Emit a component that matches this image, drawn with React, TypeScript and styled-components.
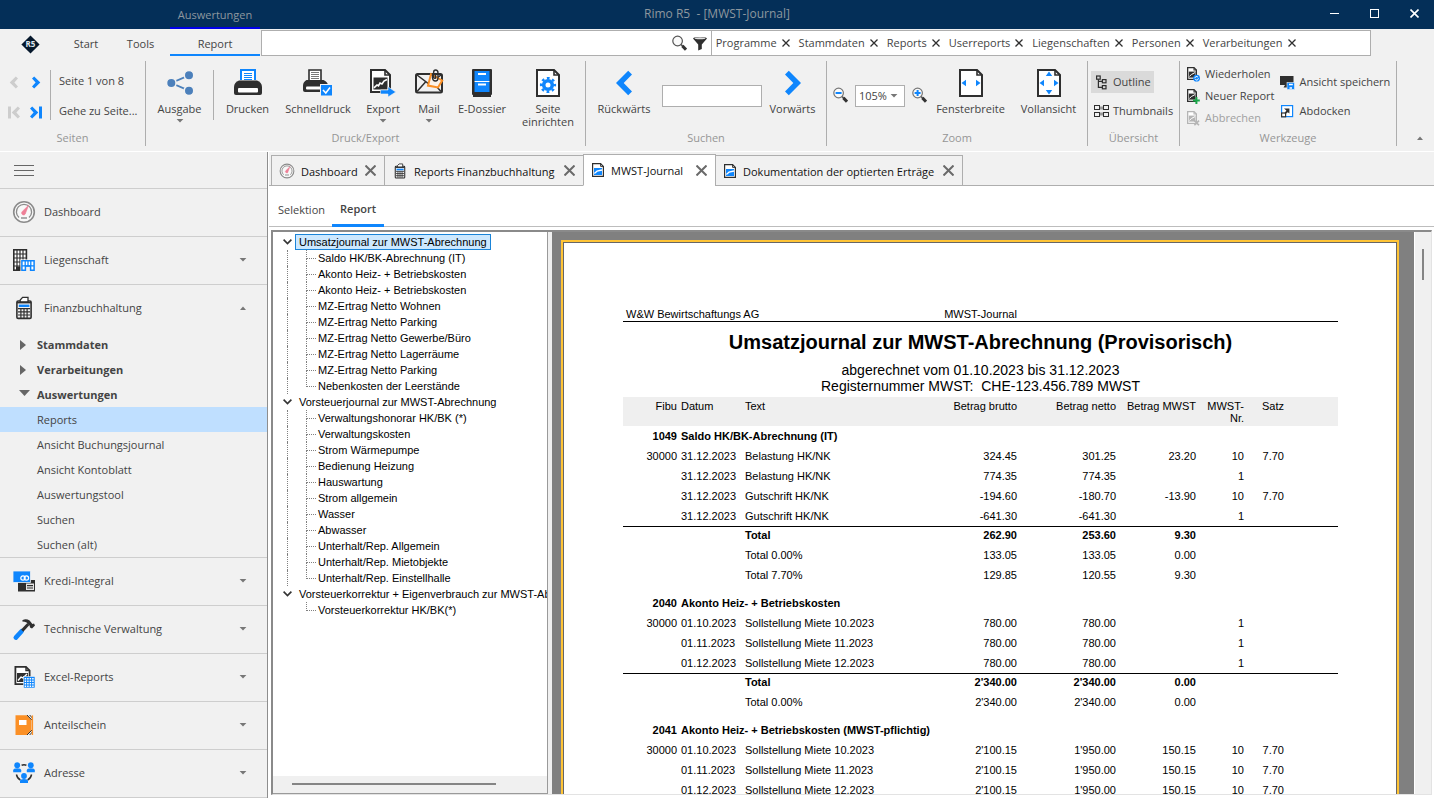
import React from "react";
import styled, { createGlobalStyle, css } from "styled-components";

const BLUE = "#0f86fd";
const INK = "#2f2f2f";
const LINE = "#aeaeae";
const CHROME = "#f1f1f1";
const UI = `"Open Sans", "Noto Sans", sans-serif`;
const REPORT = `"Liberation Sans", Arial, sans-serif`;

const Global = createGlobalStyle`
  *, *::before, *::after { box-sizing: border-box; }
  body { margin: 0; background: #fff; font: 11px/16px ${UI}; color: #444; }
  button, input, select { font: inherit; color: inherit; margin: 0; }
  button { border: 0; padding: 0; background: none; white-space: nowrap; cursor: pointer; }
  svg { display: block; flex: none; }
  ul { list-style: none; margin: 0; padding: 0; }
`;

const Shell = styled.div`
  display: flex;
  flex-direction: column;
  height: 100vh;
  overflow: hidden;
`;

/* ---------- title bar ---------- */

const TitleBar = styled.header`
  display: grid;
  grid-template-columns: 1fr auto 1fr;
  flex: none;
  height: 29px;
  background: #042f58;
  color: #8d979f;
`;

const ContextTab = styled.div`
  width: 90px;
  margin-left: 170px;
  padding-top: 7px;
  border-bottom: 2px solid #0000e6;
  text-align: center;
`;

const WindowTitle = styled.div`
  padding-top: 6px;
  font-size: 12px;
  white-space: pre;
`;

const WindowButtons = styled.div`
  display: flex;
  justify-content: flex-end;
`;

const WindowButton = styled.button`
  display: grid;
  place-items: center;
  width: 40px;
  height: 27px;
`;

/* ---------- ribbon ---------- */

const Ribbon = styled.div`
  flex: none;
  background: ${CHROME};
  border-bottom: 1px solid #fff;
`;

const TabRow = styled.div`
  display: flex;
  height: 27px;
`;

const LogoBox = styled.div`
  display: grid;
  place-items: center;
  width: 61px;
  padding-top: 3px;
`;

const RibbonTab = styled.button<{ $w: number; $active?: boolean }>`
  width: ${(p) => p.$w}px;
  padding-top: 4px;
  border-bottom: 2px solid ${(p) => (p.$active ? BLUE : "transparent")};
`;

const SearchBox = styled.div`
  display: flex;
  align-items: center;
  gap: 6px;
  flex: 450 1 0;
  height: 26px;
  margin: 1px 0 0 1px;
  padding-right: 4px;
  background: #fff;
  border: 1px solid ${LINE};
`;

const SearchInput = styled.input`
  flex: 1;
  min-width: 0;
  height: 22px;
  border: 0;
  outline: 0;
`;

const FilterBox = styled.div`
  display: flex;
  align-items: center;
  flex: 662 1 0;
  height: 26px;
  margin: 1px 63px 0 -1px;
  padding-left: 4px;
  background: #fff;
  border: 1px solid ${LINE};
  overflow: hidden;
`;

const FilterChip = styled.div`
  display: flex;
  align-items: center;
  gap: 5px;
  margin-right: 9px;
`;

const RibbonBody = styled.div`
  display: flex;
  height: 95px;
  padding: 5px 0;
`;

const Group = styled.section<{ $w: number }>`
  display: flex;
  flex-direction: column;
  width: ${(p) => p.$w}px;
  border-right: 1px solid ${LINE};
`;

const GroupBody = styled.div`
  display: flex;
  flex: 1;
  min-height: 0;
`;

const GroupName = styled.div`
  text-align: center;
  color: #969696;
`;

const Divider = styled.div`
  width: 1px;
  height: 50px;
  margin-top: 9px;
  background: ${LINE};
`;

const BigButton = styled.button<{ $w: number }>`
  display: flex;
  flex-direction: column;
  align-items: center;
  width: ${(p) => p.$w}px;
  padding-top: 8px;
  line-height: 13px;
`;

const BigLabel = styled.span`
  margin: 5px 0 4px;
`;

const CaretBox = styled.svg`
  margin: 0;
`;

const PagerGrid = styled.div`
  display: grid;
  grid-template-columns: 22px 22px;
  grid-auto-rows: 30px;
  width: 50px;
  padding: 6px 0 0 3px;
  button { display: grid; place-items: center; }
`;

const TextStack = styled.div`
  display: flex;
  flex-direction: column;
  gap: 14px;
  padding: 12px 0 0 8px;
  text-align: left;
`;

const FieldWrap = styled.div`
  display: flex;
  align-items: flex-start;
  padding-top: 24px;
`;

const FindInput = styled.input`
  width: 100px;
  height: 22px;
  border: 1px solid ${LINE};
  background: #fff;
  outline: 0;
`;

const ZoomWrap = styled(FieldWrap)`
  gap: 7px;
  padding-left: 6px;
  button { padding-top: 2px; }
`;

const ZoomSelect = styled.span`
  display: flex;
  align-items: center;
  width: 50px;
  height: 22px;
  padding-right: 6px;
  background: #fff;
  border: 1px solid ${LINE};
  select {
    appearance: none;
    flex: 1;
    min-width: 0;
    border: 0;
    padding: 0 0 0 3px;
    background: none;
    outline: 0;
  }
`;

const ToolColumn = styled.div<{ $gap: number; $top: number }>`
  display: flex;
  flex-direction: column;
  align-items: flex-start;
  gap: ${(p) => p.$gap}px;
  padding-top: ${(p) => p.$top}px;
  &:first-child { padding-left: 3px; }
`;

const ToolButton = styled.button<{ $active?: boolean; $dim?: boolean }>`
  display: flex;
  align-items: center;
  gap: 4px;
  height: 22px;
  padding: 0 3px;
  background: ${(p) => (p.$active ? "#dadada" : "none")};
  color: ${(p) => (p.$dim ? "#a0a0a0" : "inherit")};
`;

const CollapseButton = styled.button`
  display: flex;
  align-items: flex-end;
  margin-left: auto;
  padding: 0 10px 6px 0;
`;

/* ---------- side navigation ---------- */

const Workspace = styled.div`
  display: flex;
  flex: 1;
  min-height: 0;
`;

const Sidebar = styled.nav`
  width: 268px;
  flex: none;
  background: ${CHROME};
  border-right: 1px solid #8e8e8e;
  overflow: hidden;
`;

const MenuToggle = styled.button`
  display: flex;
  align-items: center;
  width: 100%;
  height: 37px;
  padding-left: 14px;
  border-bottom: 1px solid #cecece;
`;

const NavRow = styled.button<{ $open?: boolean }>`
  display: flex;
  align-items: center;
  width: 100%;
  height: ${(p) => (p.$open ? 47 : 48)}px;
  padding: 0 20px 1px 12px;
  border-bottom: ${(p) => (p.$open ? 0 : 1)}px solid #cecece;
  span.label { flex: 1; margin-left: 8px; text-align: left; }
`;

const SubList = styled.ul`
  border-bottom: 1px solid #cecece;
`;

const SubItem = styled.button<{ $head?: boolean; $active?: boolean }>`
  display: flex;
  align-items: center;
  width: 100%;
  height: 25px;
  padding-left: 18px;
  background: ${(p) => (p.$active ? "#bfdfff" : "none")};
  font-weight: ${(p) => (p.$head ? 700 : 400)};
`;

const ArrowCell = styled.span`
  width: 19px;
`;

/* ---------- document area ---------- */

const Main = styled.main`
  display: flex;
  flex-direction: column;
  flex: 1;
  min-width: 0;
  padding: 0 0 3px 1px;
  background: #fff;
`;

const DocTabs = styled.div`
  display: flex;
  align-items: flex-end;
  height: 34px;
  flex: none;
  padding-left: 2px;
  background: ${CHROME};
  box-shadow: inset 0 -1px 0 ${LINE};
`;

const DocTab = styled.div<{ $w: number; $active?: boolean }>`
  display: flex;
  align-items: center;
  width: ${(p) => p.$w}px;
  height: ${(p) => (p.$active ? 32 : 31)}px;
  margin-right: -1px;
  padding: 0 8px 0 7px;
  border: 1px solid ${LINE};
  color: #111;
  ${(p) =>
    p.$active &&
    css`
      background: #fff;
      border-bottom-color: #fff;
    `}
  button.title { flex: 1; margin-left: 6px; padding-top: 2px; text-align: left; font-weight: 500; }
`;

const SubTabs = styled.div`
  display: flex;
  flex: none;
  height: 41px;
  padding-left: 3px;
  border-bottom: 1px solid #bdbdbd;
`;

const SubTab = styled.button<{ $active?: boolean }>`
  height: 41px;
  padding: ${(p) => (p.$active ? "8px 8px 0" : "10px 7px 0 6px")};
  border-bottom: 3px solid ${(p) => (p.$active ? BLUE : "transparent")};
  font-weight: ${(p) => (p.$active ? 600 : 400)};
`;

const Viewer = styled.div`
  display: flex;
  flex: 1;
  min-height: 0;
  margin: 3px 2px 0;
  border: 1px solid #8a8a8a;
  border-width: 2px 1px 1px 2px;
  border-right-color: #e3e3e3;
  border-bottom-color: #e3e3e3;
`;

const TreePane = styled.div`
  display: flex;
  flex-direction: column;
  flex: none;
  width: 275px;
  background: #fff;
  border-right: 1px solid #9a9a9a;
  border-bottom: 1px solid #9a9a9a;
  overflow: hidden;
`;

const Tree = styled.ul`
  flex: 1;
  min-height: 0;
  padding: 2px 0 0 7px;
  overflow: hidden;
  font: 11px/16px ${REPORT};
  color: #000;
`;

const RootRow = styled.div`
  display: flex;
  align-items: center;
  height: 16px;
`;

const NodeLabel = styled.button<{ $selected?: boolean }>`
  flex: none;
  height: 16px;
  padding: 0 3px;
  line-height: 14px;
  border: 1px solid ${(p) => (p.$selected ? "#1a84d8" : "transparent")};
  background: ${(p) => (p.$selected ? "#cce8ff" : "none")};
`;

const Expander = styled.span`
  display: grid;
  place-items: center;
  flex: none;
  width: 14px;
  height: 16px;
  margin-right: 1px;
`;

const Leaf = styled.li<{ $root: boolean }>`
  display: flex;
  height: 16px;
  margin-left: 7px;
  padding-left: 18px;
  border-left: 1px dotted ${(p) => (p.$root ? "#808080" : "transparent")};
`;

const Branch = styled.span<{ $last: boolean }>`
  width: 10px;
  margin-right: -2px;
  &::before, &::after { content: ""; display: block; height: 8px; border-left: 1px dotted #808080; }
  &::before { height: 9px; border-bottom: 1px dotted #808080; }
  &::after { height: 7px; border-left-color: ${(p) => (p.$last ? "transparent" : "#808080")}; }
`;

const HScroll = styled.div`
  flex: none;
  height: 17px;
  padding: 7px 51px 0 19px;
  background: #f0f0f0;
  div { height: 2px; background: #858585; }
`;

const Splitter = styled.div`
  flex: none;
  width: 4px;
  background: #f0f0f0;
`;

const PaperDesk = styled.div`
  flex: 1;
  min-width: 0;
  padding: 8px 15px 0 9px;
  background: #808080;
  overflow: hidden;
`;

const VScroll = styled.div`
  flex: none;
  width: 17px;
  padding: 17px 0 0 7px;
  background: #f0f0f0;
  border-left: 1px solid #fff;
  div { width: 2px; height: 31px; background: #858585; }
`;

const Paper = styled.article`
  min-height: 1180px;
  padding: 64px 58px 0 59px;
  background: #fff;
  border: 1px solid #666;
  outline: 2px solid #ffc436;
  margin: 2px;
  font: 11px/12px ${REPORT};
  color: #000;
`;

const PaperHead = styled.div`
  display: grid;
  grid-template-columns: 1fr auto 1fr;
  height: 15px;
  padding: 1px 3px 0;
  border-bottom: 1px solid #000;
`;

const ReportTitle = styled.h1`
  margin: 8px 0;
  text-align: center;
  font-size: 20px;
  line-height: 24px;
`;

const ReportSub = styled.p`
  margin: 0;
  text-align: center;
  font-size: 14px;
  line-height: 16px;
  white-space: pre;
`;

const ReportTable = styled.table`
  width: 100%;
  margin-top: 3px;
  border-collapse: separate;
  border-spacing: 0;
  table-layout: fixed;
  th, td { padding: 0 2px; text-align: right; vertical-align: middle; font-weight: inherit; white-space: nowrap; }
  th.l, td.l { text-align: left; }
  thead th { height: 29px; padding-top: 3px; vertical-align: top; background: #efefef; }
`;

const Row = styled.tr<{ $kind: "group" | "line" | "total" | "gap" }>`
  height: ${(p) => ({ group: 20, line: 20, total: 19, gap: 8 })[p.$kind]}px;
  font-weight: ${(p) => (p.$kind === "group" || p.$kind === "total" ? 700 : 400)};
  td {
    border-top: ${(p) => (p.$kind === "total" ? "1px solid #000" : "0")};
    padding-bottom: ${(p) => (p.$kind === "total" ? 2 : 0)}px;
  }
`;

/* ---------- icons ---------- */

const Caret = ({ up }: { up?: boolean }) => (
  <CaretBox width="8" height="4" viewBox="0 0 8 4" fill="#777">
    <path d={up ? "M1 4 H7 L4 0.6 Z" : "M0.6 0 H7.4 L4 3.6 Z"} />
  </CaretBox>
);

const Cross = ({ s = 8, w = 1.3, c = INK }: { s?: number; w?: number; c?: string }) => (
  <svg width={s} height={s} viewBox={`0 0 ${s} ${s}`} stroke={c} strokeWidth={w}>
    <path d={`M0.5 0.5 L${s - 0.5} ${s - 0.5} M${s - 0.5} 0.5 L0.5 ${s - 0.5}`} />
  </svg>
);

const BigChevron = ({ right }: { right?: boolean }) => (
  <svg width="18" height="28" viewBox="0 0 18 28" fill={BLUE}>
    {right ? (
      <path d="M1 5.5 L4.8 1.7 L17 14 L4.8 26.3 L1 22.5 L9.3 14 Z" />
    ) : (
      <path d="M17 5.5 L13.2 1.7 L1 14 L13.2 26.3 L17 22.5 L8.7 14 Z" />
    )}
  </svg>
);

const PageChevron = ({ right, bar, c = BLUE }: { right?: boolean; bar?: boolean; c?: string }) => (
  <svg width="12" height="13" viewBox="0 0 12 13" fill={c}>
    {right ? (
      <path d={bar ? "M0 2.6 L2.2 0.4 L8.3 6.5 L2.2 12.6 L0 10.4 L3.6 6.5 Z" : "M2 2.6 L4.2 0.4 L10.3 6.5 L4.2 12.6 L2 10.4 L5.6 6.5 Z"} />
    ) : (
      <path d={bar ? "M12 2.6 L9.8 0.4 L3.7 6.5 L9.8 12.6 L12 10.4 L8.4 6.5 Z" : "M10 2.6 L7.8 0.4 L1.7 6.5 L7.8 12.6 L10 10.4 L6.4 6.5 Z"} />
    )}
    {bar && <rect x={right ? 9 : 0} y="0.5" width="3" height="12" />}
  </svg>
);

const Logo = () => (
  <svg width="19" height="19" viewBox="0 0 19 19">
    <path d="M9.5 0.4 L18.6 9.5 L9.5 18.6 L0.4 9.5 Z" fill="#06182c" />
    <text x="9.5" y="12.3" textAnchor="middle" fontFamily="Open Sans, sans-serif" fontWeight="700" fontSize="8" fill="#dfe6ee">R5</text>
  </svg>
);

const Magnifier = ({ sign }: { sign?: "+" | "-" }) => (
  <svg width="15" height="16" viewBox="0 0 15 16" fill="none">
    <path d="M8.9 9.4 L11 11.5" stroke="#555" strokeWidth="1.6" />
    <path d="M10.4 10.9 L14 14.6" stroke="#333" strokeWidth="3" />
    <circle cx="5.6" cy="6" r="4.8" stroke={sign ? "#777" : "#555"} strokeWidth="1.2" fill="#fafafa" />
    {sign && <path d="M2.6 6 H8.6" stroke={BLUE} strokeWidth="2" />}
    {sign === "+" && <path d="M5.6 3 V9" stroke={BLUE} strokeWidth="2" />}
  </svg>
);

const Funnel = () => (
  <svg width="14" height="15" viewBox="0 0 14 15">
    <path d="M0 2.5 C1 0.6 13 0.6 14 2.5 L8.8 8.4 V13 L5.2 14.6 V8.4 Z" fill={INK} />
    <ellipse cx="7" cy="2.3" rx="5.4" ry="1" fill="#ddd" />
  </svg>
);

const ShareIcon = () => (
  <svg width="28" height="28" viewBox="0 0 28 28" fill="#4c80bb">
    <path d="M23 6.3 L5.3 14 L23 21.7" fill="none" stroke="#4c80bb" strokeWidth="1.8" />
    <g stroke={CHROME} strokeWidth="1.6">
      <circle cx="5.3" cy="14" r="4.8" /><circle cx="23" cy="6.3" r="4.8" /><circle cx="23" cy="21.7" r="4.8" />
    </g>
  </svg>
);

const PrinterIcon = () => (
  <svg width="28" height="28" viewBox="0 0 28 28">
    <path d="M7 11 V1 H21 V11" fill="#fff" stroke={BLUE} strokeWidth="2" />
    <path d="M10 4.5 H18 M10 6.5 H18 M10 8.5 H18 M10 10.5 H18" stroke={BLUE} />
    <path d="M5 11.5 H23 C26 12.5 28 15 28 18 V24 Q28 26 26 26 H2 Q0 26 0 24 V18 C0 15 2 12.5 5 11.5 Z" fill={INK} />
    <rect x="4" y="19" width="20" height="4.5" rx="1" fill="#fff" />
  </svg>
);

const QuickPrintIcon = () => (
  <svg width="30" height="28" viewBox="0 0 30 28">
    <path d="M6 11 V1 H18 V11" fill="#fff" stroke={INK} strokeWidth="1.6" />
    <path d="M8 3.5 H16 M8 5.5 H16 M8 7.5 H16 M8 9.5 H16" stroke="#777" />
    <path d="M3.5 11 H20.5 C23 12 25 14 25 16.5 V21 Q25 23 23 23 H2 Q0 23 0 21 V16.5 C0 14 1.5 12 3.5 11 Z" fill={INK} />
    <rect x="3" y="17.5" width="16" height="3" rx="1" fill="#fff" />
    <rect x="17.5" y="15.5" width="12" height="11.5" fill={BLUE} stroke={CHROME} />
    <path d="M20 21 L22.8 24 L27 18.5" fill="none" stroke="#fff" strokeWidth="1.5" />
  </svg>
);

const DocOutline = ({ w = 24, h = 28, fold = 6, t = 2, c = INK }) => (
  <>
    <path d={`M${t / 2} ${t / 2} H${w - fold} L${w - t / 2} ${fold} V${h - t / 2} H${t / 2} Z`} fill="#fff" stroke={c} strokeWidth={t} />
    <path d={`M${w - fold} ${t / 2} V${fold} H${w - t / 2}`} fill="none" stroke={c} strokeWidth={t * 0.8} />
  </>
);

const ExportIcon = () => (
  <svg width="26" height="28" viewBox="0 0 26 28">
    <DocOutline w={21} h={24} fold={6} />
    <rect x="3.5" y="8.5" width="14" height="12" fill={INK} />
    <path d="M4 18.8 L7 16 L8.5 16.8 L10 14 L12 15 L14 12 L17 10.5" fill="none" stroke="#fff" strokeWidth="1.6" />
    <path d="M10.5 21 H18 V17.8 L25.8 23 L18 28 V25 H10.5 Z" fill={BLUE} stroke={CHROME} strokeWidth="0.6" />
  </svg>
);

const MailIcon = () => (
  <svg width="29" height="28" viewBox="0 0 29 28" fill="none">
    <rect x="1" y="5" width="26" height="18.5" rx="1.5" stroke={INK} strokeWidth="2" />
    <path d="M2 6 L14 15 L26 6 M2 22.5 L10.5 13 M26 22.5 L17.5 13" stroke={INK} strokeWidth="1.5" />
    <path d="M16 5.2 L27.2 11.5 L23 18.4 L13 16.6 Z" fill="#fbf3ea" stroke="#fb9026" strokeWidth="2" />
    <path d="M17.5 4.5 V9 Q17.8 12 20.4 12 Q23 12 23 9 V4 Q23 1 20.6 1 Q18.6 1 18.6 3.6 V8.4 Q19 9.6 20.6 9 V4.6" stroke={INK} strokeWidth="1.4" />
  </svg>
);

const CabinetIcon = () => (
  <svg width="20" height="28" viewBox="0 0 20 28">
    <rect x="0" y="0" width="20" height="26" rx="1" fill={INK} />
    <rect x="1" y="25" width="18" height="3" fill={INK} />
    <rect x="2.5" y="2" width="15" height="10" fill={BLUE} /><rect x="2.5" y="13" width="15" height="10" fill={BLUE} />
    <path d="M2.5 12.5 H17.5" stroke="#fff" />
    <path d="M6 5 H14 M6 15.5 H14" stroke="#fff" strokeWidth="2" />
  </svg>
);

const PageSetupIcon = () => (
  <svg width="24" height="28" viewBox="0 0 24 28">
    <DocOutline />
    <circle cx="12" cy="16" r="4.3" fill="none" stroke={BLUE} strokeWidth="3.6" />
    <circle cx="12" cy="16" r="6.9" fill="none" stroke={BLUE} strokeWidth="2.4" strokeDasharray="2.7 2.72" strokeDashoffset="1.35" />
  </svg>
);

const FitIcon = ({ both }: { both?: boolean }) => (
  <svg width="24" height="28" viewBox="0 0 24 28">
    <DocOutline />
    <g fill={BLUE}>
      <path d="M2.5 14 L7 10.8 V17.2 Z M21.5 14 L17 10.8 V17.2 Z" />
      {both && <path d="M12 2.5 L8.8 7 H15.2 Z M12 25.5 L8.8 21 H15.2 Z" />}
    </g>
  </svg>
);

const OutlineIcon = () => (
  <svg width="15" height="15" viewBox="0 0 15 15" fill="none" stroke={INK} strokeWidth="1.2">
    <rect x="2.6" y="1" width="3.6" height="3.2" /><rect x="8.4" y="4.6" width="3.6" height="3.2" /><rect x="8.4" y="10.6" width="3.6" height="3.2" />
    <path d="M4.4 4.2 V12.4 H8.4 M4.4 6.4 H8.4" />
  </svg>
);

const ThumbsIcon = () => (
  <svg width="15" height="12" viewBox="0 0 15 12" fill="none" stroke={INK} strokeWidth="1">
    <path d="M6 3 H9 M6 9 H9" stroke="#999" strokeWidth="3" />
    <rect x="0.5" y="0.5" width="5" height="4" /><rect x="9.5" y="0.5" width="5" height="4" />
    <rect x="0.5" y="7.5" width="5" height="4" /><rect x="9.5" y="7.5" width="5" height="4" />
  </svg>
);

const ReportGlyph = ({ kind }: { kind: "again" | "new" | "stop" }) => {
  const c = kind === "stop" ? "#b5b5b5" : INK;
  return (
    <svg width="15" height="15" viewBox="0 0 15 15">
      <g transform="translate(1 0)"><DocOutline w={10} h={13} fold={3} t={1.3} c={c} /></g>
      <rect x="2.8" y="4.6" width="6.6" height="6" fill={c} />
      <path d="M3.4 9.4 L5.6 7.4 L9 5.6" stroke="#fff" fill="none" />
      {kind === "again" && <><circle cx="10.6" cy="11.2" r="3.4" fill={BLUE} /><path d="M8.8 11.2 a1.8 1.8 0 0 1 3.2 -1 M12.4 11.4 a1.8 1.8 0 0 1 -3.2 1" stroke="#fff" fill="none" /></>}
      {kind === "new" && <path d="M10.4 8 V15 M7 11.4 H13.8" stroke="#19a649" strokeWidth="2" />}
      {kind === "stop" && <path d="M8.4 9.6 L13 14.2 M13 9.6 L8.4 14.2" stroke={c} strokeWidth="1.6" />}
    </svg>
  );
};

const SaveViewIcon = () => (
  <svg width="15" height="15" viewBox="0 0 15 15">
    <rect x="0" y="1" width="13.5" height="9" fill={INK} />
    <path d="M5 10 H9 V12.5 H3.5" fill={INK} />
    <rect x="7" y="7.5" width="7.5" height="7" fill={BLUE} stroke={CHROME} strokeWidth="0.6" />
    <path d="M9 9.5 H12.8 M9.5 13 H12" stroke="#fff" strokeWidth="1.6" />
  </svg>
);

const UndockIcon = () => (
  <svg width="15" height="15" viewBox="0 0 15 15">
    <rect x="1.6" y="1.6" width="11" height="11" fill="#fff" stroke={BLUE} strokeWidth="1.2" />
    <rect x="1.6" y="9" width="4" height="3.8" fill="#fff" stroke={INK} strokeWidth="1.2" />
    <path d="M4 4.6 H9.4 V9.6 L7.8 8.2 L5.6 10 L4.6 9 L6.4 6.6 Z" fill={INK} />
  </svg>
);

const GaugeIcon = ({ s = 24 }: { s?: number }) => (
  <svg width={s} height={s} viewBox="0 0 24 24" fill="none" stroke="#8b8b8b">
    <circle cx="12" cy="12" r="10.3" strokeWidth="1.6" fill="#f8f8f8" />
    <path d="M7 17.6 A7.6 7.6 0 1 1 17 17.6" strokeWidth="1.3" />
    <path d="M9 18 H15" strokeWidth="1.4" />
    <path d="M16.6 5.2 L10.3 11.4 A2 2 0 1 0 13.6 13 Z" fill="#ee8097" stroke="#ee8097" strokeWidth="0.6" />
  </svg>
);

const BuildingIcon = () => (
  <svg width="24" height="24" viewBox="0 0 24 24">
    <rect x="1.8" y="1.8" width="12.6" height="20.4" fill="#fff" stroke={INK} strokeWidth="1.6" />
    <path d="M5 2 V22 M8 2 V22 M11 2 V22 M2 6 H14 M2 10 H14 M2 14 H14 M2 18 H14" stroke={INK} strokeWidth="1.2" />
    <path d="M4 22 V18.5 H9 V22" fill={INK} />
    <rect x="8.4" y="11.4" width="15.6" height="12.6" fill={CHROME} />
    <path d="M9.9 22.3 V12.8 H22.1 V22.3 H18.6 V18 H13.4 V22.3 Z" fill="#fff" stroke={BLUE} strokeWidth="1.5" />
    <path d="M13.2 13 V18 M16 13 V18 M18.8 13 V18 M10 17.8 H22" stroke={BLUE} strokeWidth="1.3" />
  </svg>
);

const CalculatorIcon = ({ s = 24 }: { s?: number }) => (
  <svg width={s} height={s} viewBox="0 0 24 24">
    <rect x="4.9" y="5" width="14.2" height="17.4" rx="1.2" fill={CHROME} stroke={INK} strokeWidth="1.6" />
    <path d="M8.2 6 V4 L10.6 1.4 H16 V6 Z" fill="#fff" stroke={INK} strokeWidth="1.3" />
    <path d="M5 6.6 H19" stroke={INK} strokeWidth="1.6" />
    <rect x="6.8" y="8.6" width="10.6" height="2.4" fill={BLUE} />
    <path d="M6 12.6 H18 M6 15.8 H18 M6 19 H18 M8.9 12.6 V22 M12 12.6 V22 M15.1 12.6 V22" stroke={INK} strokeWidth="1.2" />
  </svg>
);

const CardsIcon = () => (
  <svg width="24" height="24" viewBox="0 0 24 24">
    <rect x="6" y="11" width="17" height="11.5" fill={INK} />
    <path d="M14 14.5 H22 V21 H14 Z" fill="#e6e6e6" /><path d="M15 16.6 H21 M15 19 H21" stroke={INK} strokeWidth="1.1" />
    <rect x="1" y="2" width="17.5" height="11.5" fill={BLUE} stroke={CHROME} strokeWidth="0.8" />
    <g fill="none" stroke="#fff" strokeWidth="1.2"><circle cx="11" cy="9" r="2.2" /><circle cx="14.4" cy="9" r="2.2" /></g>
  </svg>
);

const HammerIcon = () => (
  <svg width="24" height="24" viewBox="0 0 24 24">
    <path d="M3.8 20.6 L9.6 14.2" stroke={BLUE} strokeWidth="4.6" strokeLinecap="round" />
    <path d="M10.2 13.6 L16.4 7" stroke={INK} strokeWidth="3" />
    <path d="M10.4 3.2 Q14 1 17.6 3.6 L20.4 7 L22 6.4 L23 8.4 L20 11.4 L18 10.6 L17.6 8.6 L14.6 5.6 Q12.6 4.6 10.4 4.6 Z" fill={INK} />
  </svg>
);

const ExcelIcon = () => (
  <svg width="24" height="24" viewBox="0 0 24 24">
    <g transform="translate(2.5 1)"><DocOutline w={16} h={19} fold={4.5} t={1.8} /></g>
    <rect x="5" y="8" width="11" height="9" fill={INK} />
    <path d="M6 15.5 L9 12 L11 13 L15 9" stroke="#fff" strokeWidth="1.4" fill="none" />
    <rect x="11.5" y="11.5" width="11.5" height="11.5" fill={BLUE} stroke={CHROME} strokeWidth="0.6" />
    <path d="M13.4 13 V22.4 M15.9 13 V22.4 M18.4 13 V22.4 M20.9 13 V22.4" stroke="#fff" strokeWidth="1.5" strokeDasharray="1.6 0.9" />
  </svg>
);

const CertificateIcon = () => (
  <svg width="24" height="24" viewBox="0 0 24 24">
    <path d="M3.5 2.2 H15 L19.4 7 V17 L15 22 H3.5 Z" fill="#fb9026" />
    <rect x="7" y="7" width="7.5" height="5" fill="#fff" />
    <path d="M15 2 L20 7.2 M17.6 2 L20.4 5 M15 22 L20 17 M17.6 22 L20.4 19" stroke={INK} />
    <path d="M20.4 2.4 V22" stroke="#fb9026" strokeWidth="1.4" />
  </svg>
);

const Person = ({ x, y }: { x: number; y: number }) => (
  <g fill={BLUE}>
    <circle cx={x} cy={y} r="2.9" />
    <path d={`M${x - 4} ${y + 7} V${y + 5} Q${x - 4} ${y + 3} ${x} ${y + 3} Q${x + 4} ${y + 3} ${x + 4} ${y + 5} V${y + 7} Z`} />
  </g>
);

const PeopleIcon = () => (
  <svg width="24" height="24" viewBox="0 0 24 24">
    <path d="M9.6 4.2 Q12 3.2 14.4 4.2 M4.4 13.5 Q5.4 17.6 8.4 19 M19.6 13.5 Q18.6 17.6 15.6 19" fill="none" stroke={INK} strokeWidth="1.5" />
    <Person x={5.2} y={4.2} /><Person x={18.8} y={4.2} /><Person x={12} y={15} />
  </svg>
);

const PreviewDocIcon = () => (
  <svg width="14" height="16" viewBox="0 0 14 16">
    <g transform="translate(1 1)"><DocOutline w={12} h={14} fold={3.4} t={1.2} /></g>
    <rect x="3" y="6" width="8" height="7" fill={BLUE} />
    <path d="M3.4 11.4 L6 9.2 L11 8" stroke="#fff" strokeWidth="1.3" fill="none" />
  </svg>
);

/* ---------- data ---------- */

const filters = ["Programme", "Stammdaten", "Reports", "Userreports", "Liegenschaften", "Personen", "Verarbeitungen"];

const subItems = ["Reports", "Ansicht Buchungsjournal", "Ansicht Kontoblatt", "Auswertungstool", "Suchen", "Suchen (alt)"];

const tree = [
  {
    name: "Umsatzjournal zur MWST-Abrechnung",
    items: ["Saldo HK/BK-Abrechnung (IT)", "Akonto Heiz- + Betriebskosten", "Akonto Heiz- + Betriebskosten", "MZ-Ertrag Netto Wohnen", "MZ-Ertrag Netto Parking", "MZ-Ertrag Netto Gewerbe/Büro", "MZ-Ertrag Netto Lagerräume", "MZ-Ertrag Netto Parking", "Nebenkosten der Leerstände"],
  },
  {
    name: "Vorsteuerjournal zur MWST-Abrechnung",
    items: ["Verwaltungshonorar HK/BK (*)", "Verwaltungskosten", "Strom Wärmepumpe", "Bedienung Heizung", "Hauswartung", "Strom allgemein", "Wasser", "Abwasser", "Unterhalt/Rep. Allgemein", "Unterhalt/Rep. Mietobjekte", "Unterhalt/Rep. Einstellhalle"],
  },
  { name: "Vorsteuerkorrektur + Eigenverbrauch zur MWST-Abrechnung", items: ["Vorsteuerkorrektur HK/BK(*)"] },
];

type ReportRow = { kind: "group" | "line" | "total" | "gap"; cells: string[] };
const line = (...cells: string[]): ReportRow => ({ kind: "line", cells });
const total = (...cells: string[]): ReportRow => ({ kind: "total", cells: ["", "", "Total", ...cells] });
const group = (nr: string, name: string): ReportRow => ({ kind: "group", cells: [nr, name] });
const gap: ReportRow = { kind: "gap", cells: [] };

const report: ReportRow[] = [
  group("1049", "Saldo HK/BK-Abrechnung (IT)"),
  line("30000", "31.12.2023", "Belastung HK/NK", "324.45", "301.25", "23.20", "10", "7.70"),
  line("", "31.12.2023", "Belastung HK/NK", "774.35", "774.35", "", "1", ""),
  line("", "31.12.2023", "Gutschrift HK/NK", "-194.60", "-180.70", "-13.90", "10", "7.70"),
  line("", "31.12.2023", "Gutschrift HK/NK", "-641.30", "-641.30", "", "1", ""),
  total("262.90", "253.60", "9.30", "", ""),
  line("", "", "Total 0.00%", "133.05", "133.05", "0.00", "", ""),
  line("", "", "Total 7.70%", "129.85", "120.55", "9.30", "", ""),
  gap,
  group("2040", "Akonto Heiz- + Betriebskosten"),
  line("30000", "01.10.2023", "Sollstellung Miete 10.2023", "780.00", "780.00", "", "1", ""),
  line("", "01.11.2023", "Sollstellung Miete 11.2023", "780.00", "780.00", "", "1", ""),
  line("", "01.12.2023", "Sollstellung Miete 12.2023", "780.00", "780.00", "", "1", ""),
  total("2'340.00", "2'340.00", "0.00", "", ""),
  line("", "", "Total 0.00%", "2'340.00", "2'340.00", "0.00", "", ""),
  gap,
  group("2041", "Akonto Heiz- + Betriebskosten (MWST-pflichtig)"),
  line("30000", "01.10.2023", "Sollstellung Miete 10.2023", "2'100.15", "1'950.00", "150.15", "10", "7.70"),
  line("", "01.11.2023", "Sollstellung Miete 11.2023", "2'100.15", "1'950.00", "150.15", "10", "7.70"),
  line("", "01.12.2023", "Sollstellung Miete 12.2023", "2'100.15", "1'950.00", "150.15", "10", "7.70"),
];

/* ---------- composed parts ---------- */

const Big = ({ w, icon, label, menu }: { w: number; icon: React.ReactNode; label: React.ReactNode; menu?: boolean }) => (
  <BigButton $w={w}>
    {icon}
    <BigLabel>{label}</BigLabel>
    {menu && <Caret />}
  </BigButton>
);

const Nav = ({ icon, label, arrow, open }: { icon: React.ReactNode; label: string; arrow?: boolean; open?: boolean }) => (
  <NavRow $open={open} aria-expanded={open}>
    {icon}
    <span className="label">{label}</span>
    {arrow && <Caret up={open} />}
  </NavRow>
);

const DocumentTab = ({ w, icon, label, active }: { w: number; icon: React.ReactNode; label: string; active?: boolean }) => (
  <DocTab $w={w} $active={active}>
    {icon}
    <button className="title">{label}</button>
    <button aria-label={`${label} schliessen`}><Cross s={11} w={2} c="#6a6a6a" /></button>
  </DocTab>
);

export default function App() {
  return (
    <Shell>
      <Global />
      <TitleBar>
        <ContextTab>Auswertungen</ContextTab>
        <WindowTitle>{"Rimo R5  - [MWST-Journal]"}</WindowTitle>
        <WindowButtons>
          <WindowButton aria-label="Minimieren"><svg width="9" height="9" stroke="#fff"><path d="M0 4.5 H9" /></svg></WindowButton>
          <WindowButton aria-label="Maximieren"><svg width="9" height="9" fill="none" stroke="#fff"><rect x="0.5" y="0.5" width="8" height="8" /></svg></WindowButton>
          <WindowButton aria-label="Schliessen"><Cross s={9} w={1.6} c="#fff" /></WindowButton>
        </WindowButtons>
      </TitleBar>

      <Ribbon>
        <TabRow>
          <LogoBox><Logo /></LogoBox>
          <RibbonTab $w={50}>Start</RibbonTab>
          <RibbonTab $w={59}>Tools</RibbonTab>
          <RibbonTab $w={90} $active>Report</RibbonTab>
          <SearchBox>
            <SearchInput type="text" aria-label="Suche" />
            <button aria-label="Suchen"><Magnifier /></button>
            <button aria-label="Filtern"><Funnel /></button>
          </SearchBox>
          <FilterBox>
            {filters.map((f) => (
              <FilterChip key={f}>
                <span>{f}</span>
                <button aria-label={`${f} entfernen`}><Cross /></button>
              </FilterChip>
            ))}
          </FilterBox>
        </TabRow>

        <RibbonBody>
          <Group $w={146}>
            <GroupBody>
              <PagerGrid>
                <button aria-label="Vorherige Seite"><PageChevron c="#cdcdcd" /></button>
                <button aria-label="Nächste Seite"><PageChevron right /></button>
                <button aria-label="Erste Seite"><PageChevron bar c="#cdcdcd" /></button>
                <button aria-label="Letzte Seite"><PageChevron right bar /></button>
              </PagerGrid>
              <Divider />
              <TextStack>
                <span>Seite 1 von 8</span>
                <button>Gehe zu Seite...</button>
              </TextStack>
            </GroupBody>
            <GroupName>Seiten</GroupName>
          </Group>

          <Group $w={440}>
            <GroupBody>
              <Big w={67} icon={<ShareIcon />} label="Ausgabe" menu />
              <Divider />
              <Big w={67} icon={<PrinterIcon />} label="Drucken" />
              <Big w={74} icon={<QuickPrintIcon />} label="Schnelldruck" />
              <Big w={56} icon={<ExportIcon />} label="Export" menu />
              <Big w={36} icon={<MailIcon />} label="Mail" menu />
              <Big w={70} icon={<CabinetIcon />} label="E-Dossier" />
              <Big w={62} icon={<PageSetupIcon />} label={<>Seite<br />einrichten</>} />
            </GroupBody>
            <GroupName>Druck/Export</GroupName>
          </Group>

          <Group $w={241}>
            <GroupBody>
              <Big w={76} icon={<BigChevron />} label="Rückwärts" />
              <FieldWrap><FindInput type="text" aria-label="Suchtext" /></FieldWrap>
              <Big w={61} icon={<BigChevron right />} label="Vorwärts" />
            </GroupBody>
            <GroupName>Suchen</GroupName>
          </Group>

          <Group $w={261}>
            <GroupBody>
              <ZoomWrap>
                <button aria-label="Verkleinern"><Magnifier sign="-" /></button>
                <ZoomSelect>
                  <select aria-label="Zoom" defaultValue="105%"><option>105%</option></select>
                  <Caret />
                </ZoomSelect>
                <button aria-label="Vergrössern"><Magnifier sign="+" /></button>
              </ZoomWrap>
              <Big w={87} icon={<FitIcon />} label="Fensterbreite" />
              <Big w={69} icon={<FitIcon both />} label="Vollansicht" />
            </GroupBody>
            <GroupName>Zoom</GroupName>
          </Group>

          <Group $w={92}>
            <GroupBody>
              <ToolColumn $gap={7} $top={10}>
                <ToolButton $active><OutlineIcon />Outline</ToolButton>
                <ToolButton><ThumbsIcon />Thumbnails</ToolButton>
              </ToolColumn>
            </GroupBody>
            <GroupName>Übersicht</GroupName>
          </Group>

          <Group $w={217}>
            <GroupBody>
              <ToolColumn $gap={0} $top={2}>
                <ToolButton><ReportGlyph kind="again" />Wiederholen</ToolButton>
                <ToolButton><ReportGlyph kind="new" />Neuer Report</ToolButton>
                <ToolButton $dim disabled><ReportGlyph kind="stop" />Abbrechen</ToolButton>
              </ToolColumn>
              <ToolColumn $gap={7} $top={10}>
                <ToolButton><SaveViewIcon />Ansicht speichern</ToolButton>
                <ToolButton><UndockIcon />Abdocken</ToolButton>
              </ToolColumn>
            </GroupBody>
            <GroupName>Werkzeuge</GroupName>
          </Group>
          <CollapseButton aria-label="Menüband einklappen"><Caret up /></CollapseButton>
        </RibbonBody>
      </Ribbon>

      <Workspace>
        <Sidebar>
          <MenuToggle aria-label="Menü"><svg width="20" height="11" stroke="#666"><path d="M0 0.5 H20 M0 5.5 H20 M0 10.5 H20" /></svg></MenuToggle>
          <Nav icon={<GaugeIcon />} label="Dashboard" />
          <Nav icon={<BuildingIcon />} label="Liegenschaft" arrow />
          <Nav icon={<CalculatorIcon />} label="Finanzbuchhaltung" arrow open />
          <SubList>
            {["Stammdaten", "Verarbeitungen", "Auswertungen"].map((h, i) => (
              <li key={h}>
                <SubItem $head>
                  <ArrowCell>
                    <svg width="12" height="12" fill="#666">{i < 2 ? <path d="M2 1 L8 6 L2 11 Z" /> : <path d="M1 1 H12 L6.5 7 Z" />}</svg>
                  </ArrowCell>
                  {h}
                </SubItem>
              </li>
            ))}
            {subItems.map((s, i) => (
              <li key={s}><SubItem $active={i === 0}><ArrowCell />{s}</SubItem></li>
            ))}
          </SubList>
          <Nav icon={<CardsIcon />} label="Kredi-Integral" arrow />
          <Nav icon={<HammerIcon />} label="Technische Verwaltung" arrow />
          <Nav icon={<ExcelIcon />} label="Excel-Reports" arrow />
          <Nav icon={<CertificateIcon />} label="Anteilschein" arrow />
          <Nav icon={<PeopleIcon />} label="Adresse" arrow />
        </Sidebar>

        <Main>
          <DocTabs>
            <DocumentTab w={114} icon={<GaugeIcon s={16} />} label="Dashboard" />
            <DocumentTab w={200} icon={<CalculatorIcon s={16} />} label="Reports Finanzbuchhaltung" />
            <DocumentTab w={133} icon={<PreviewDocIcon />} label="MWST-Journal" active />
            <DocumentTab w={248} icon={<PreviewDocIcon />} label="Dokumentation der optierten Erträge" />
          </DocTabs>
          <SubTabs>
            <SubTab>Selektion</SubTab>
            <SubTab $active>Report</SubTab>
          </SubTabs>

          <Viewer>
            <TreePane>
              <Tree>
                {tree.map((node, n) => (
                  <li key={node.name}>
                    <RootRow>
                      <Expander><svg width="9" height="6" fill="none" stroke="#333" strokeWidth="1.6"><path d="M0.6 0.6 L4.5 4.6 L8.4 0.6" /></svg></Expander>
                      <NodeLabel $selected={n === 0}>{node.name}</NodeLabel>
                    </RootRow>
                    <ul>
                      {node.items.map((item, i) => (
                        <Leaf key={i} $root={n < tree.length - 1}>
                          <Branch $last={i === node.items.length - 1} />
                          <NodeLabel>{item}</NodeLabel>
                        </Leaf>
                      ))}
                    </ul>
                  </li>
                ))}
              </Tree>
              <HScroll><div /></HScroll>
            </TreePane>
            <Splitter />
            <PaperDesk>
              <Paper>
                <PaperHead><span>W&amp;W Bewirtschaftungs AG</span><span>MWST-Journal</span></PaperHead>
                <ReportTitle>Umsatzjournal zur MWST-Abrechnung (Provisorisch)</ReportTitle>
                <ReportSub>abgerechnet vom 01.10.2023 bis 31.12.2023</ReportSub>
                <ReportSub>{"Registernummer MWST:  CHE-123.456.789 MWST"}</ReportSub>
                <ReportTable>
                  <colgroup>
                    <col style={{ width: 56 }} /><col style={{ width: 64 }} /><col /><col style={{ width: 99 }} />
                    <col style={{ width: 99 }} /><col style={{ width: 80 }} /><col style={{ width: 48 }} />
                    <col style={{ width: 40 }} /><col style={{ width: 52 }} />
                  </colgroup>
                  <thead>
                    <tr>
                      <th>Fibu</th><th className="l">Datum</th><th className="l">Text</th><th>Betrag brutto</th><th>Betrag netto</th>
                      <th>Betrag MWST</th><th>MWST-<br />Nr.</th><th>Satz</th><th />
                    </tr>
                  </thead>
                  <tbody>
                    {report.map((r, i) => (
                      <Row key={i} $kind={r.kind}>
                        {r.kind === "gap" && <td colSpan={9} />}
                        {r.kind === "group" && <><td>{r.cells[0]}</td><td className="l" colSpan={8}>{r.cells[1]}</td></>}
                        {(r.kind === "line" || r.kind === "total") && (
                          <>
                            {r.cells.map((c, j) => <td key={j} className={j === 1 || j === 2 ? "l" : undefined}>{c}</td>)}
                            <td />
                          </>
                        )}
                      </Row>
                    ))}
                  </tbody>
                </ReportTable>
              </Paper>
            </PaperDesk>
            <VScroll><div /></VScroll>
          </Viewer>
        </Main>
      </Workspace>
    </Shell>
  );
}
